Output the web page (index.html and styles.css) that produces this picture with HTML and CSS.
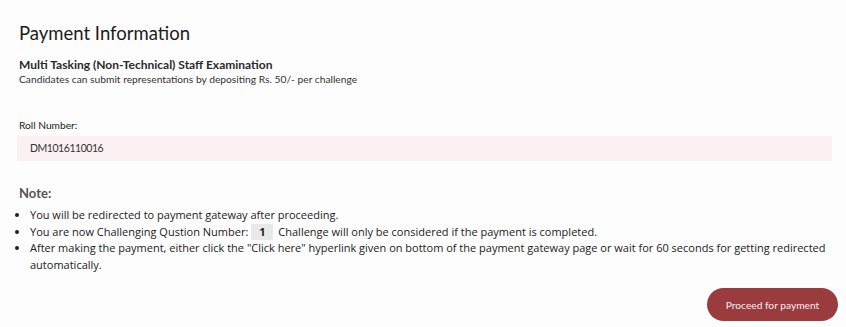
FILE: index.html
```html
<!DOCTYPE html>
<html>
<head>
<meta charset="utf-8">
<link rel="stylesheet" href="styles.css">
</head>
<body>
<div class="page">
  <h1 class="title">Payment Information</h1>
  <div class="exam">
    <div class="exam-name">Multi Tasking (Non-Technical) Staff Examination</div>
    <div class="exam-desc">Candidates can submit representations by depositing Rs. 50/- per challenge</div>
  </div>
  <div class="field">
    <label class="field-label">Roll Number:</label>
    <div class="field-input">DM1016110016</div>
  </div>
  <div class="note">
    <div class="note-title">Note:</div>
    <ul class="note-list">
      <li>You will be redirected to payment gateway after proceeding.</li>
      <li>You are now Challenging Qustion Number: <span class="badge">1</span> Challenge will only be considered if the payment is completed.</li>
      <li>After making the payment, either click the "Click here" hyperlink given on bottom of the payment gateway page or wait for 60 seconds for getting redirected automatically.</li>
    </ul>
  </div>
  <div class="actions">
    <button class="btn">Proceed for payment</button>
  </div>
</div>
</body>
</html>
```
FILE: styles.css
```css
* { box-sizing: border-box; }
html, body { margin: 0; padding: 0; background: #fdfdfd; }
body { font-family: "Lato", "Noto Sans", sans-serif; color: #222; }
.page { padding: 21px 19px 0 19px; display: flex; flex-direction: column; }
.title { margin: 0; font-size: 18.5px; font-weight: 400; line-height: 24px; color: #1c1c1c; }
.exam { margin-top: 12px; }
.exam-name { font-size: 12px; font-weight: 700; line-height: 15px; color: #2a2a2a; }
.exam-desc { font-size: 10.25px; line-height: 15px; color: #333; }
.field { margin-top: 32px; display: flex; flex-direction: column; }
.field-label { font-size: 10.2px; line-height: 13px; color: #222; }
.field-input { margin: 4px -5px 0 -2px; height: 25px; background: #fbf1f3; padding-left: 13px; font-size: 10.5px; letter-spacing: -0.45px; line-height: 25px; color: #333; }
.note { margin-top: 24px; }
.note-title { font-size: 13px; font-weight: 700; color: #555; line-height: 16px; }
.note-list { margin: 6px -10px 0 0; padding-left: 11px; font-family: "Open Sans", sans-serif; font-size: 11px; line-height: 16.5px; color: #222; }
.badge { display: inline-block; background: #e9e9e9; font-weight: 700; padding: 0 8px; margin: 0 2px 0 0; line-height: 16px; }
.actions { display: flex; justify-content: flex-end; margin-top: 15px; margin-right: -11px; }
.btn { border: none; background: #9a3b3e; color: #fbeeee; font-family: inherit; font-size: 10.2px; height: 33px; width: 131px; border-radius: 17px; padding: 0; }
```
